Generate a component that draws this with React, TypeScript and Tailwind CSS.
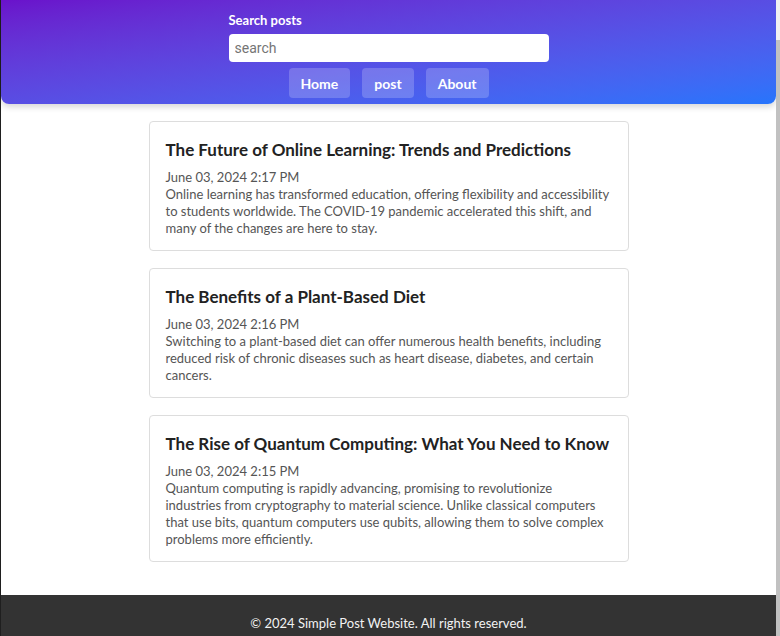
import React from 'react'

const posts = [
  {
    title: 'The Future of Online Learning: Trends and Predictions',
    date: 'June 03, 2024 2:17 PM',
    body: 'Online learning has transformed education, offering flexibility and accessibility\nto students worldwide. The COVID-19 pandemic accelerated this shift, and\nmany of the changes are here to stay.',
  },
  {
    title: 'The Benefits of a Plant-Based Diet',
    date: 'June 03, 2024 2:16 PM',
    body: 'Switching to a plant-based diet can offer numerous health benefits, including\nreduced risk of chronic diseases such as heart disease, diabetes, and certain\ncancers.',
  },
  {
    title: 'The Rise of Quantum Computing: What You Need to Know',
    date: 'June 03, 2024 2:15 PM',
    body: 'Quantum computing is rapidly advancing, promising to revolutionize\nindustries from cryptography to material science. Unlike classical computers\nthat use bits, quantum computers use qubits, allowing them to solve complex\nproblems more efficiently.',
  },
]

function PostCard({ title, date, body }: { title: string; date: string; body: string }) {
  return (
    <article className="border border-[#dddddd] rounded-[4px] bg-white px-4 pt-[17px] pb-[13px]">
      <h2 className="text-[17px] leading-[21px] font-bold text-[#222222] mb-[9px]">{title}</h2>
      <div className="text-[13px] leading-[17px] text-[#555555]">
        <p>{date}</p>
        <p className="whitespace-pre-line">{body}</p>
      </div>
    </article>
  )
}

export default function App() {
  return (
    <div className="h-[636px] overflow-hidden flex bg-white font-['Lato','Noto_Sans',sans-serif]">
      {/* window edge */}
      <div className="w-px bg-[#1f1f1f]" />

      <div className="flex-1 flex flex-col">
        {/* ── Header ── */}
        <header className="h-[104px] shrink-0 rounded-b-[8px] bg-gradient-to-br from-[#6a11cb] to-[#2575fc] shadow-[0_3px_6px_rgba(0,0,0,0.16)] flex flex-col items-center pt-[12px]">
          <div className="w-[320px]">
            <label className="block text-white font-bold text-[13px] leading-[16px] mb-[6px]">Search posts</label>
            <input
              type="text"
              placeholder="search"
              className="w-full h-[28px] rounded-[4px] bg-white px-[6px] text-[14px] outline-none placeholder:text-[#757575] font-['Roboto','Liberation_Sans',sans-serif]"
            />
          </div>
          <nav className="flex gap-3 mt-[6px]">
            {['Home', 'post', 'About'].map((label) => (
              <a
                key={label}
                href="#"
                className="h-[30px] px-[12px] flex items-center rounded-[4px] bg-white/20 text-white font-bold text-[14px]"
              >
                {label}
              </a>
            ))}
          </nav>
        </header>

        {/* ── Posts ── */}
        <main className="w-[480px] shrink-0 mx-auto mt-[17px] flex flex-col gap-[17px]">
          {posts.map((p) => (
            <PostCard key={p.title} {...p} />
          ))}
        </main>

        {/* ── Footer ── */}
        <footer className="mt-[33px] bg-[#333333] text-[#f2f2f2] text-center text-[13px] pt-[19px] pb-5 shrink-0">
          © 2024 Simple Post Website. All rights reserved.
        </footer>
      </div>

      {/* scrollbar */}
      <div className="w-[4px] bg-[#f1f1f1] flex flex-col">
        <div className="h-[40px]" />
        <div className="flex-1 bg-[#c1c1c1]" />
      </div>
    </div>
  )
}
